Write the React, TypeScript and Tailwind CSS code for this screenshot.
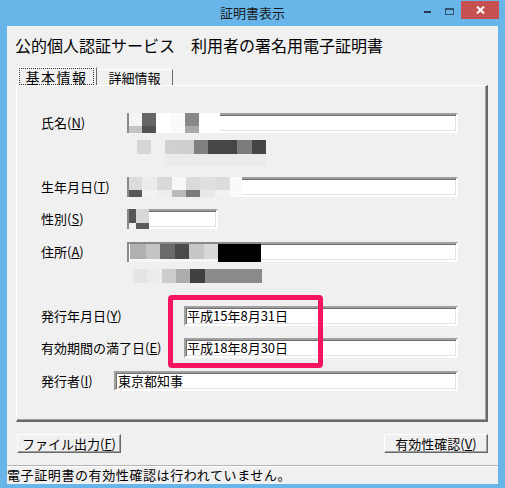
import React from 'react';

type TwoTone = [string, string, string, string?];

function Cells({ cells }: { cells: TwoTone[] }) {
  return (
    <>
      {cells.map((c, i) => (
        <div key={i} className={`flex h-full flex-col ${c[0]}`}>
          <div className={`${c[3] ?? 'h-[13px]'} ${c[1]}`} />
          <div className={`flex-1 ${c[2]}`} />
        </div>
      ))}
    </>
  );
}

function Strip({ cells, className }: { cells: string[]; className: string }) {
  return (
    <div className={`flex ${className}`}>
      {cells.map((c, i) => (
        <div key={i} className={`h-full ${c}`} />
      ))}
    </div>
  );
}

const sunken =
  'bg-white border-2 border-t-[#a0a0a0] border-l-[#a0a0a0] border-b-white border-r-white shadow-[inset_1px_1px_0_#6e6e6e,inset_-1px_-1px_0_#e3e3e3]';
const restField =
  'flex-1 bg-white border-t-2 border-r-2 border-b-2 border-t-[#a0a0a0] border-r-white border-b-white shadow-[inset_0_1px_0_#6e6e6e,inset_-1px_-1px_0_#e3e3e3]';
const raised =
  'bg-[#f0f0f0] border border-t-white border-l-white border-r-[#696969] border-b-[#696969] shadow-[inset_-1px_-1px_0_#a0a0a0]';

function Label({ text, k, w }: { text: string; k: string; w: string }) {
  return (
    <div className={`${w} shrink-0 whitespace-nowrap text-[13px] leading-[20px] text-black`}>
      {text}(<span className="underline">{k}</span>)
    </div>
  );
}

const nameCells: TwoTone[] = [
  ['w-[13px]', 'bg-[#f4f4f4]', 'bg-[#c4c4c4]'],
  ['w-[14px]', 'bg-[#666666]', 'bg-[#525252]'],
  ['w-[15px]', 'bg-white', 'bg-white'],
  ['w-[14px]', 'bg-[#fafafa]', 'bg-[#fafafa]'],
  ['w-[14px]', 'bg-[#888888]', 'bg-[#a8a8a8]'],
  ['w-[21px]', 'bg-white', 'bg-white'],
];

const birthCells: TwoTone[] = [
  ['w-[13px]', 'bg-[#dcdcdc]', 'bg-[#585858]'],
  ['w-[15px]', 'bg-[#ebebeb]', 'bg-[#f2f2f2]'],
  ['w-[15px]', 'bg-[#d9d9d9]', 'bg-[#eeeeee]'],
  ['w-[14px]', 'bg-[#f7f7f7]', 'bg-[#b9b9b9]'],
  ['w-[14px]', 'bg-[#dadada]', 'bg-[#7a7a7a]'],
  ['w-[15px]', 'bg-[#e0e0e0]', 'bg-[#e8e8e8]'],
  ['w-[15px]', 'bg-[#dcdcdc]', 'bg-[#f2f2f2]'],
  ['w-[12px]', 'bg-[#fafafa]', 'bg-[#fafafa]'],
];

const genderCells: TwoTone[] = [
  ['w-[7px]', 'bg-[#555555]', 'bg-[#f0f0f0]', 'h-[14px]'],
  ['w-[13px]', 'bg-[#d8d8d8]', 'bg-[#5a5a5a]', 'h-[14px]'],
];

const addrCells: TwoTone[] = [
  ['w-[1px]', 'bg-white', 'bg-white', 'h-[15px]'],
  ['w-[16px]', 'bg-[#b0b0b0]', 'bg-[#f6f6f6]', 'h-[15px]'],
  ['w-[14px]', 'bg-[#c4c4c4]', 'bg-[#f6f6f6]', 'h-[15px]'],
  ['w-[15px]', 'bg-[#6a6a6a]', 'bg-[#f6f6f6]', 'h-[15px]'],
  ['w-[14px]', 'bg-[#4a4a4a]', 'bg-[#f6f6f6]', 'h-[15px]'],
  ['w-[15px]', 'bg-[#c6c6c6]', 'bg-[#f6f6f6]', 'h-[15px]'],
  ['w-[14px]', 'bg-[#d8d8d8]', 'bg-[#f6f6f6]', 'h-[15px]'],
  ['w-[43px]', 'bg-black', 'bg-black', 'h-[15px]'],
];

export default function App() {
  return (
    <div className="flex h-[488px] w-[505px] flex-col bg-[#68b6e9] font-['Noto_Sans_CJK_JP','Noto_Sans',sans-serif] text-black">
      {/* title bar */}
      <div className="grid h-[26px] shrink-0 grid-cols-[1fr_auto_1fr]">
        <div />
        <div className="self-center text-[13px] leading-[26px] text-[#1a1a1a]">証明書表示</div>
        <div className="flex items-start justify-self-end pr-[6px]">
          <div className="mt-[1px] flex h-[20px] w-[22px] items-center justify-center">
            <div className="mt-[2px] h-[2px] w-[7px] bg-[#26394d]" />
          </div>
          <div className="mt-[1px] flex h-[20px] w-[23px] items-center justify-center">
            <div className="h-[7px] w-[9px] border border-t-2 border-[#34506c]" />
          </div>
          <div className="mt-[1px] flex h-[18px] w-[38px] items-center justify-center bg-[#c75050]">
            <svg width="9" height="8" viewBox="0 0 9 8">
              <path d="M1 0.5 L8 7.5 M8 0.5 L1 7.5" stroke="white" strokeWidth="2" />
            </svg>
          </div>
        </div>
      </div>

      {/* client area */}
      <div className="mx-[7px] mb-[4px] flex flex-1 flex-col bg-[#f0f0f0]">
        <div className="ml-[8px] mt-[9px] h-[20px] whitespace-nowrap text-[16px] leading-[20px]">
          公的個人認証サービス　利用者の署名用電子証明書
        </div>

        {/* tabs */}
        <div className="ml-[11px] mt-[12px] flex h-[18px] items-end">
          <div className="flex h-[18px] w-[79px] border-r border-r-[#696969] border-l border-l-white border-t border-t-white pr-[2px]">
            <div className="flex flex-1 items-center justify-center border border-dotted border-[#333] text-[14px] leading-[16px] tracking-[1.5px]">
              基本情報
            </div>
          </div>
          <div className="flex h-[16px] w-[76px] items-center justify-center border-r border-r-[#696969] border-t border-t-white text-[13px] leading-[16px]">
            詳細情報
          </div>
        </div>

        {/* panel */}
        <div className="relative ml-[9px] flex h-[337px] w-[472px] flex-col border-l border-t border-l-white border-t-white border-r-2 border-b-2 border-r-[#696969] border-b-[#696969] pl-[24px] pr-[28px] shadow-[inset_-1px_-1px_0_#a0a0a0]">
          {/* name */}
          <div className="mt-[27px] flex h-[20px] items-center">
            <Label text="氏名" k="N" w="w-[86px]" />
            <div className="flex h-[20px] flex-1">
              <div className="flex h-full border-l-2 border-l-[#8a8a8a]">
                <Cells cells={nameCells} />
              </div>
              <div className={restField} />
            </div>
          </div>
          <Strip
            className="ml-[96px] mt-[7px] h-[14px]"
            cells={[
              'w-[14px] bg-[#d6d6d6]',
              'w-[14px]',
              'w-[15px] bg-[#d0d0d0]',
              'w-[14px] bg-[#cfcfcf]',
              'w-[14px] bg-[#808080]',
              'w-[29px] bg-[#464646]',
              'w-[15px] bg-[#7c7c7c]',
              'w-[14px] bg-[#454545]',
            ]}
          />
          <div className="ml-[124px] h-[12px] w-[101px] bg-[#ebebeb]" />

          {/* birth */}
          <div className="mt-[11px] flex h-[20px] items-center">
            <Label text="生年月日" k="T" w="w-[86px]" />
            <div className="flex h-[20px] flex-1">
              <div className="flex h-full border-l-2 border-l-[#8a8a8a]">
                <Cells cells={birthCells} />
              </div>
              <div className={restField} />
            </div>
          </div>

          {/* gender */}
          <div className="mt-[12px] flex h-[20px] items-center">
            <Label text="性別" k="S" w="w-[86px]" />
            <div className="flex h-[20px] w-[91px]">
              <div className="flex h-full border-l-2 border-l-[#8a8a8a]">
                <Cells cells={genderCells} />
              </div>
              <div className={restField} />
            </div>
          </div>

          {/* address */}
          <div className="mt-[13px] flex h-[20px] items-center">
            <Label text="住所" k="A" w="w-[86px]" />
            <div className="flex h-[20px] flex-1">
              <div className="flex h-full border-l-2 border-t-2 border-l-[#8a8a8a] border-t-[#8a8a8a]">
                <Cells cells={addrCells} />
              </div>
              <div className={restField} />
            </div>
          </div>
          <Strip
            className="ml-[92px] mt-[7px] h-[14px]"
            cells={[
              'w-[14px] bg-[#e4e4e4]',
              'w-[15px] bg-[#ececec]',
              'w-[14px] bg-[#cccccc]',
              'w-[14px] bg-[#acacac]',
              'w-[15px] bg-[#404040]',
              'w-[57px] bg-[#8a8a8a]',
            ]}
          />

          {/* issue date */}
          <div className="mt-[23px] flex h-[20px] items-center">
            <Label text="発行年月日" k="Y" w="w-[143px]" />
            <div className={`flex h-[20px] flex-1 items-center pl-[1px] text-[13px] leading-[16px] ${sunken}`}>
              平成15年8月31日
            </div>
          </div>

          {/* expiry */}
          <div className="mt-[12px] flex h-[20px] items-center">
            <Label text="有効期間の満了日" k="E" w="w-[143px]" />
            <div className={`flex h-[20px] flex-1 items-center pl-[1px] text-[13px] leading-[16px] ${sunken}`}>
              平成18年8月30日
            </div>
          </div>

          {/* issuer */}
          <div className="mt-[13px] flex h-[20px] items-center">
            <Label text="発行者" k="I" w="w-[73px]" />
            <div className={`flex h-[20px] flex-1 items-center pl-[2px] text-[13px] leading-[16px] ${sunken}`}>
              東京都知事
            </div>
          </div>

          {/* highlight annotation */}
          <div className="pointer-events-none absolute left-[151px] top-[209px] h-[73px] w-[155px] rounded-[4px] border-[5px] border-[#f5155f]" />
        </div>

        {/* buttons */}
        <div className="mt-[12px] flex h-[19px] justify-between px-[10px]">
          <div className={`flex h-[19px] w-[104px] items-center justify-center text-[13px] leading-[16px] ${raised}`}>
            ファイル出力(<span className="underline">F</span>)
          </div>
          <div className={`flex h-[19px] w-[104px] items-center justify-center text-[13px] leading-[16px] ${raised}`}>
            有効性確認(<span className="underline">V</span>)
          </div>
        </div>

        {/* status bar */}
        <div className="mt-[12px] h-[19px] border-t border-t-[#b4b4b4] text-[13px] leading-[18px] tracking-[0.6px] shadow-[inset_0_1px_0_white] whitespace-nowrap">
          電子証明書の有効性確認は行われていません。
        </div>
      </div>
    </div>
  );
}
